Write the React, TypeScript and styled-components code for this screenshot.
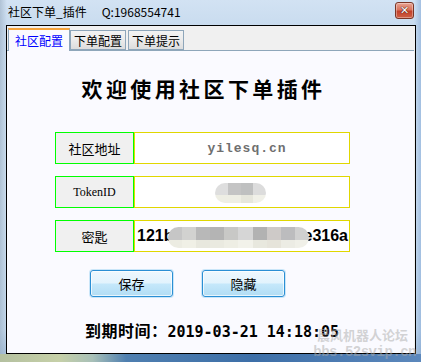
import React from "react";
import styled, { createGlobalStyle } from "styled-components";

const GlobalStyle = createGlobalStyle`
  html, body { margin: 0; padding: 0; overflow: hidden; }
  body { font-family: "Noto Sans CJK SC", "Noto Sans", sans-serif; }
`;

const Window = styled.div`
  position: relative;
  width: 421px;
  height: 362px;
  display: flex;
  flex-direction: column;
  background:
    linear-gradient(90deg, rgba(150,170,190,0.55) 0px, rgba(200,215,230,0) 7px, rgba(200,215,230,0) 414px, rgba(120,160,210,0.5) 421px),
    linear-gradient(180deg, #d2e2f3 0px, #c9dcef 25px, #cfe0f1 200px, #c4d8ec 330px, #9fbad6 362px);
  overflow: hidden;
`;

const BottomFrame = styled.div`
  position: absolute;
  left: 0;
  right: 0;
  bottom: 0;
  height: 8px;
  background: linear-gradient(90deg, #b4c0a0 0%, #c6d0a8 14%, #a8c0b8 22%, #4f7fb0 30%, #3d6fa8 60%, #5c88bc 100%);
`;

const TitleBar = styled.div`
  height: 25px;
  display: flex;
  align-items: center;
  justify-content: space-between;
  padding: 0 7px 0 8px;
  box-sizing: border-box;
`;

const TitleText = styled.div`
  display: flex;
  gap: 15px;
  font-size: 12px;
  color: #000;
  margin-top: -2px;
`;

const CloseButton = styled.div`
  width: 19px;
  height: 17px;
  margin-top: -4px;
  border: 1px solid #7a3526;
  border-radius: 3px;
  box-sizing: border-box;
  background: linear-gradient(180deg, #e9a392 0%, #d9735d 45%, #c2402a 55%, #cf5f44 100%);
  display: flex;
  align-items: center;
  justify-content: center;
  color: #fff;
  font: bold 11px "DejaVu Sans", sans-serif;
  text-shadow: 0 0 1px #401008, 0 0 1px #401008;
  box-shadow: inset 0 0 0 1px rgba(255,255,255,0.35);
`;

const Client = styled.div`
  position: relative;
  flex: 1;
  margin: 0 5px 8px 6px;
  border: 1px solid #000;
  display: flex;
  flex-direction: column;
  background: #f0f0f0;
`;

const TabStrip = styled.div`
  height: 24px;
  display: flex;
  align-items: flex-end;
  padding-left: 1px;
  border-bottom: 1px solid #8ea6ba;
  margin-right: 1px;
`;

const Tab = styled.div<{ $active?: boolean }>`
  height: ${(p) => (p.$active ? 23 : 20)}px;
  padding: 0 ${(p) => (p.$active ? 6 : 3)}px;
  margin-bottom: ${(p) => (p.$active ? -1 : 0)}px;
  margin-right: ${(p) => (p.$active ? 0 : 2)}px;
  box-sizing: border-box;
  display: flex;
  align-items: center;
  font-size: 12px;
  color: ${(p) => (p.$active ? "#0000ff" : "#000")};
  border: 1px solid #8ea6ba;
  border-bottom: ${(p) => (p.$active ? "none" : "1px solid #8ea6ba")};
  border-top: ${(p) => (p.$active ? "2px solid #f6a33a" : "1px solid #8ea6ba")};
  background: ${(p) =>
    p.$active ? "#fafaff" : "linear-gradient(180deg, #f3f3f3 0%, #ebebeb 50%, #dddddd 100%)"};
  position: relative;
  z-index: ${(p) => (p.$active ? 2 : 1)};
`;

const Panel = styled.div`
  flex: 1;
  background: #fafaff;
  margin-right: 1px;
  display: flex;
  flex-direction: column;
`;

const Heading = styled.h1`
  margin: 25px 0 0 0;
  padding-right: 14px;
  text-align: center;
  font-size: 21px;
  line-height: 24px;
  font-weight: 700;
  letter-spacing: 3.4px;
  color: #000;
`;

const Rows = styled.div`
  margin: 32px 0 0 48px;
  display: flex;
  flex-direction: column;
  gap: 12px;
`;

const Row = styled.div`
  display: flex;
  width: 295px;
  height: 32px;
`;

const Label = styled.div<{ $mono?: boolean }>`
  width: 79px;
  box-sizing: border-box;
  border: 1px solid #00ff00;
  background: #f0f0f0;
  display: flex;
  align-items: center;
  justify-content: center;
  font-size: ${(p) => (p.$mono ? "12px" : "13px")};
  font-family: ${(p) => (p.$mono ? '"Liberation Serif", serif' : '"Noto Sans CJK SC", sans-serif')};
  color: #000;
`;

const Value = styled.div<{ $align?: string }>`
  position: relative;
  flex: 1;
  box-sizing: border-box;
  border: 1px solid #e0d700;
  background: #fff;
  display: flex;
  align-items: center;
  justify-content: ${(p) => p.$align || "center"};
  overflow: hidden;
`;

const Site = styled.span`
  font: bold 13px "Liberation Mono", monospace;
  letter-spacing: 1px;
  color: #6f6f6f;
  margin-left: 10px;
`;

const KeyText = styled.span`
  font: bold 16px "Liberation Sans", Arial, sans-serif;
  color: #000;
  padding: 0 1px 0 2px;
`;

const Blur = styled.div<{ $left: number; $width: number; $top: number; $height: number }>`
  position: absolute;
  left: ${(p) => p.$left}px;
  top: ${(p) => p.$top}px;
  width: ${(p) => p.$width}px;
  height: ${(p) => p.$height}px;
  border-radius: ${(p) => p.$height / 2}px;
  overflow: hidden;
  display: flex;
`;

const BlurCell = styled.div<{ $c: string; $d: string }>`
  flex: 1;
  background: linear-gradient(180deg, ${(p) => p.$c} 0%, ${(p) => p.$c} 62%, ${(p) => p.$d} 62%, ${(p) => p.$d} 100%);
`;

const Buttons = styled.div`
  margin: 18px 0 0 83px;
  display: flex;
  gap: 29px;
`;

const Button = styled.button`
  width: 83px;
  height: 27px;
  box-sizing: border-box;
  border: 1px solid #2b8fd4;
  border-radius: 3px;
  padding: 0;
  background: linear-gradient(180deg, #eef8fe 0%, #e2f3fd 48%, #c5e8fb 52%, #b2ddf4 100%);
  box-shadow: inset 0 0 0 1px rgba(255,255,255,0.7), 0 0 0 1px rgba(60,170,230,0.25);
  font: 13px "Noto Sans CJK SC", sans-serif;
  color: #000;
`;

const Expiry = styled.div`
  margin: 21px 0 0 0;
  text-align: center;
  line-height: 20px;
  font-weight: bold;
  color: #000;
  padding-left: 3px;
`;

const ExpiryLabel = styled.span`
  font: bold 16px "Noto Sans CJK SC", sans-serif;
  letter-spacing: 0.5px;
`;

const ExpiryValue = styled.span`
  font: bold 15px "DejaVu Sans Mono", monospace;
  white-space: pre;
`;

const Watermark = styled.div`
  position: absolute;
  right: 5px;
  bottom: 2px;
  display: flex;
  flex-direction: column;
  align-items: flex-end;
  color: rgba(170, 170, 170, 0.5);
  pointer-events: none;
  line-height: 14px;
`;

const WatermarkCn = styled.span`
  font: bold 13px "Noto Sans CJK SC", sans-serif;
  margin-right: 8px;
`;

const WatermarkUrl = styled.span`
  font: bold 14px "Liberation Mono", monospace;
  letter-spacing: -0.5px;
`;

const tokenCells: [string, string][] = [
  ["#dedede", "#eeeee4"],
  ["#c4c4c4", "#eeeee4"],
  ["#bfc0c0", "#e6e6dc"],
  ["#dcdcdc", "#f0f0e8"],
];

const keyCells: [string, string][] = [
  ["#c6c6c6", "#ececE2"],
  ["#d2d2d0", "#f0f0e6"],
  ["#b8b8b8", "#e8e8de"],
  ["#b4b4b4", "#eaeae0"],
  ["#c8c8c6", "#eeeee4"],
  ["#d6d6d6", "#f2f2ea"],
  ["#b2b2b2", "#e8e8de"],
  ["#cecac8", "#e6e4da"],
  ["#bcbcbe", "#ececE4"],
  ["#d0d0d0", "#f0f0e8"],
];

export default function App() {
  return (
    <>
      <GlobalStyle />
      <Window>
        <TitleBar>
          <TitleText>
            <span>社区下单_插件</span>
            <span>Q:1968554741</span>
          </TitleText>
          <CloseButton>✕</CloseButton>
        </TitleBar>
        <Client>
          <TabStrip>
            <Tab $active>社区配置</Tab>
            <Tab>下单配置</Tab>
            <Tab>下单提示</Tab>
          </TabStrip>
          <Panel>
            <Heading>欢迎使用社区下单插件</Heading>
            <Rows>
              <Row>
                <Label>社区地址</Label>
                <Value>
                  <Site>yilesq.cn</Site>
                </Value>
              </Row>
              <Row>
                <Label $mono>TokenID</Label>
                <Value>
                  <Blur $left={80} $width={51} $top={6} $height={20}>
                    {tokenCells.map(([c, d], i) => (
                      <BlurCell key={i} $c={c} $d={d} />
                    ))}
                  </Blur>
                </Value>
              </Row>
              <Row>
                <Label>密匙</Label>
                <Value $align="space-between">
                  <KeyText>121b</KeyText>
                  <KeyText>e316a</KeyText>
                  <Blur $left={33} $width={141} $top={6} $height={21}>
                    {keyCells.map(([c, d], i) => (
                      <BlurCell key={i} $c={c} $d={d} />
                    ))}
                  </Blur>
                </Value>
              </Row>
            </Rows>
            <Buttons>
              <Button>保存</Button>
              <Button>隐藏</Button>
            </Buttons>
            <Expiry>
              <ExpiryLabel>到期时间：</ExpiryLabel>
              <ExpiryValue>2019-03-21 14:18:05</ExpiryValue>
            </Expiry>
          </Panel>
        </Client>
        <BottomFrame />
        <Watermark>
          <WatermarkCn>晨风机器人论坛</WatermarkCn>
          <WatermarkUrl>bbs.52svip.cn</WatermarkUrl>
        </Watermark>
      </Window>
    </>
  );
}
